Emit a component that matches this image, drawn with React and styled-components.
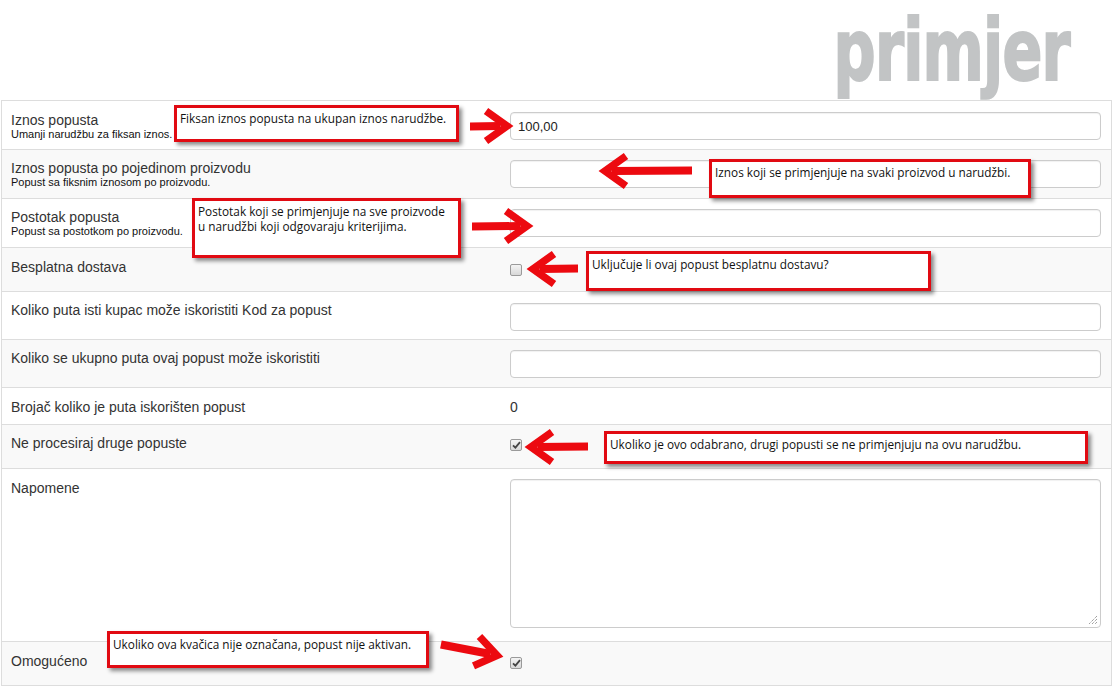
import React from "react";
import styled, { createGlobalStyle } from "styled-components";

const Global = createGlobalStyle`
  html, body { margin: 0; padding: 0; background: #fff; overflow: hidden; }
  * { box-sizing: border-box; }
  #root { width: 1113px; height: 688px; }
`;

const Page = styled.div`
  position: relative;
  width: 1113px;
  height: 688px;
  font-family: "Liberation Sans", Arial, sans-serif;
`;

const Header = styled.header`
  height: 100px;
  display: flex;
  justify-content: flex-end;
  align-items: flex-start;
  padding-right: 43px;
`;

const Logo = styled.div`
  font-family: "DejaVu Sans Condensed", "DejaVu Sans", sans-serif;
  font-weight: 700;
  font-size: 86px;
  line-height: 1;
  color: #c2c4c5;
  -webkit-text-stroke: 2px #c2c4c5;
  margin-top: 7px;
  letter-spacing: -1px;
  transform: scaleX(0.76);
  transform-origin: right top;
`;

const Table = styled.div`
  margin-left: 1px;
  width: 1111px;
  border: 1px solid #dddddd;
  border-bottom: none;
`;

const Row = styled.div`
  display: grid;
  grid-template-columns: 508px 1fr;
  height: ${(p) => p.$h}px;
  background: ${(p) => (p.$alt ? "#f9f9f9" : "#ffffff")};
  border-bottom: 1px solid #dddddd;
`;

const LabelCell = styled.div`
  padding: ${(p) => p.$pt}px 10px 0 9px;
`;

const Label = styled.div`
  font-size: 14px;
  line-height: 16px;
  color: #333;
`;

const Sub = styled.div`
  font-size: 11px;
  line-height: 13px;
  color: #111;
`;

const ValueCell = styled.div`
  padding: ${(p) => p.$pt}px 10px 0 0;
`;

const Input = styled.div`
  width: 591px;
  height: 28px;
  border: 1px solid #cccccc;
  border-radius: 4px;
  background: #fff;
  box-shadow: inset 0 1px 1px rgba(0, 0, 0, 0.06);
  font-size: 13px;
  color: #222;
  padding: 6px 7px;
  line-height: 15px;
`;

const TextArea = styled.div`
  position: relative;
  width: 591px;
  height: 149px;
  border: 1px solid #cccccc;
  border-radius: 4px;
  background: #fff;
  box-shadow: inset 0 1px 1px rgba(0, 0, 0, 0.06);
`;

const Grip = styled.svg`
  position: absolute;
  right: 2px;
  bottom: 2px;
`;

const ValueText = styled.div`
  font-size: 14px;
  line-height: 16px;
  color: #333;
`;

const Check = styled.span`
  display: inline-flex;
  align-items: center;
  justify-content: center;
  width: 12px;
  height: 12px;
  margin-top: ${(p) => p.$mt}px;
  border: 1px solid #9a9a9a;
  border-radius: 2px;
  background: linear-gradient(#f4f4f4, #d8d8d8);
`;

const Note = styled.div`
  position: absolute;
  left: ${(p) => p.$x}px;
  top: ${(p) => p.$y}px;
  width: ${(p) => p.$w}px;
  height: ${(p) => p.$h}px;
  border: 3px solid #e10a12;
  background: #fff;
  box-shadow: 3px 3px 4px rgba(0, 0, 0, 0.45);
  padding: 3px 3px 0 3px;
  font-family: "Open Sans", "Noto Sans", sans-serif;
  font-size: 11.8px;
  line-height: 15px;
  color: #111;
  white-space: pre-line;
`;

const Overlay = styled.svg`
  position: absolute;
  left: 0;
  top: 0;
  pointer-events: none;
`;

const rows = [
  { label: "Iznos popusta", sub: "Umanji narudžbu za fiksan iznos.", kind: "input", value: "100,00", h: 49, lpt: 11, vpt: 11 },
  { label: "Iznos popusta po pojedinom proizvodu", sub: "Popust sa fiksnim iznosom po proizvodu.", kind: "input", h: 49, lpt: 10, vpt: 10 },
  { label: "Postotak popusta", sub: "Popust sa postotkom po proizvodu.", kind: "input", h: 49, lpt: 10, vpt: 10 },
  { label: "Besplatna dostava", kind: "check", checked: false, h: 44, lpt: 11, vpt: 11, mt: 5 },
  { label: "Koliko puta isti kupac može iskoristiti Kod za popust", kind: "input", h: 48, lpt: 10, vpt: 11 },
  { label: "Koliko se ukupno puta ovaj popust može iskoristiti", kind: "input", h: 48, lpt: 10, vpt: 10 },
  { label: "Brojač koliko je puta iskorišten popust", kind: "text", value: "0", h: 37, lpt: 11, vpt: 11 },
  { label: "Ne procesiraj druge popuste", kind: "check", checked: true, h: 44, lpt: 10, vpt: 10, mt: 4 },
  { label: "Napomene", kind: "textarea", h: 173, lpt: 11, vpt: 10 },
  { label: "Omogućeno", kind: "check", checked: true, h: 44, lpt: 11, vpt: 11, mt: 4 },
];

const notes = [
  { x: 174, y: 105, w: 285, h: 37, t: "Fiksan iznos popusta na ukupan iznos narudžbe." },
  { x: 709, y: 159, w: 322, h: 39, t: "Iznos koji se primjenjuje na svaki proizvod u narudžbi." },
  { x: 192, y: 198, w: 269, h: 60, t: "Postotak koji se primjenjuje na sve proizvode\nu narudžbi koji odgovaraju kriterijima." },
  { x: 586, y: 251, w: 345, h: 40, t: "Uključuje li ovaj popust besplatnu dostavu?" },
  { x: 604, y: 431, w: 484, h: 33, t: "Ukoliko je ovo odabrano, drugi popusti se ne primjenjuju na ovu narudžbu." },
  { x: 107, y: 631, w: 322, h: 37, t: "Ukoliko ova kvačica nije označana, popust nije aktivan." },
];

const arrows = [
  { x1: 470, y1: 126, x2: 510, y2: 126 },
  { x1: 692, y1: 171, x2: 602, y2: 171 },
  { x1: 472, y1: 226, x2: 530, y2: 226 },
  { x1: 578, y1: 269, x2: 530, y2: 269 },
  { x1: 588, y1: 447, x2: 528, y2: 447 },
  { x1: 441, y1: 644, x2: 500, y2: 656 },
];

function Arrow({ x1, y1, x2, y2 }) {
  const dx = x2 - x1;
  const dy = y2 - y1;
  const len = Math.hypot(dx, dy);
  const ang = (Math.atan2(dy, dx) * 180) / Math.PI;
  const hl = 24;
  const hw = 15;
  return (
    <g transform={`translate(${x1} ${y1}) rotate(${ang})`} fill="#ec0a10" stroke="#ec0a10">
      <polygon points={`0,-3.5 ${len - 10},-4 ${len - 10},4 0,4.5`} stroke="none" />
      <polyline
        points={`${len - hl},${-hw} ${len - 3},0 ${len - hl},${hw}`}
        fill="none"
        strokeWidth="7.5"
        strokeLinejoin="miter"
        strokeMiterlimit="6"
      />
    </g>
  );
}

function CheckBox({ checked, mt }) {
  return (
    <Check $mt={mt}>
      {checked && (
        <svg width="9" height="8" viewBox="0 0 9 8">
          <path d="M1 4.3 L3.4 6.6 L8 1.2" fill="none" stroke="#444" strokeWidth="1.8" />
        </svg>
      )}
    </Check>
  );
}

function Value({ r }) {
  if (r.kind === "input") return <Input>{r.value || ""}</Input>;
  if (r.kind === "text") return <ValueText>{r.value}</ValueText>;
  if (r.kind === "check") return <CheckBox checked={r.checked} mt={r.mt} />;
  return (
    <TextArea>
      <Grip width="10" height="10" viewBox="0 0 10 10">
        <path d="M9 1 L1 9 M9 4 L4 9 M9 7 L7 9" stroke="#777" strokeWidth="1" strokeDasharray="1 1" />
      </Grip>
    </TextArea>
  );
}

export default function App() {
  return (
    <Page>
      <Global />
      <Header>
        <Logo>primjer</Logo>
      </Header>
      <Table>
        {rows.map((r, i) => (
          <Row key={i} $h={r.h} $alt={i % 2 === 1}>
            <LabelCell $pt={r.lpt}>
              <Label>{r.label}</Label>
              {r.sub && <Sub>{r.sub}</Sub>}
            </LabelCell>
            <ValueCell $pt={r.vpt}>
              <Value r={r} />
            </ValueCell>
          </Row>
        ))}
      </Table>
      {notes.map((n, i) => (
        <Note key={i} $x={n.x} $y={n.y} $w={n.w} $h={n.h}>
          {n.t}
        </Note>
      ))}
      <Overlay width="1113" height="688">
        {arrows.map((a, i) => (
          <Arrow key={i} {...a} />
        ))}
      </Overlay>
    </Page>
  );
}
